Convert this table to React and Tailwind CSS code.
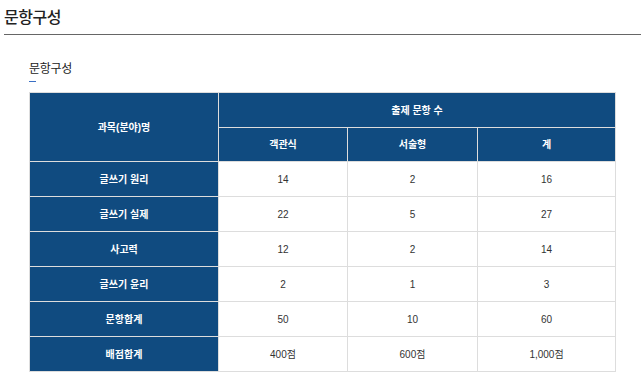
import React from 'react'

const rows = [
  ['글쓰기 원리', '14', '2', '16'],
  ['글쓰기 실제', '22', '5', '27'],
  ['사고력', '12', '2', '14'],
  ['글쓰기 윤리', '2', '1', '3'],
  ['문항합계', '50', '10', '60'],
  ['배점합계', '400점', '600점', '1,000점'],
]

const font = { fontFamily: '"Liberation Sans", "Noto Sans CJK KR", sans-serif' }

export default function App() {
  return (
    <div className="w-[641px] h-[387px] bg-white overflow-hidden text-[#222]" style={font}>
      <div className="ml-1">
        <h2 className="pt-[8px] pb-[6px] text-[16px] leading-[20px] font-medium tracking-[-0.5px] border-b border-[#666]">
          문항구성
        </h2>
        <div className="pl-[25px] pt-[26px]">
          <h3 className="text-[12px] leading-[16px] tracking-[-0.3px]">문항구성</h3>
          <div className="w-[7px] h-[1px] bg-[#3a6fc4] mt-[4px]"></div>

          <table className="mt-[10px] w-[587px] table-fixed border-collapse border border-[#dddddd] text-[10px]">
            <colgroup>
              <col className="w-[189px]" />
              <col className="w-[129px]" />
              <col className="w-[130px]" />
              <col />
            </colgroup>
            <thead>
              <tr className="h-[35px]">
                <th rowSpan={2} className="bg-[#104b80] text-white font-bold border border-[#dddddd]">과목(분야)명</th>
                <th colSpan={3} className="bg-[#104b80] text-white font-bold border border-[#dddddd]">출제 문항 수</th>
              </tr>
              <tr className="h-[34px]">
                <th className="bg-[#104b80] text-white font-bold border border-[#dddddd]">객관식</th>
                <th className="bg-[#104b80] text-white font-bold border border-[#dddddd]">서술형</th>
                <th className="bg-[#104b80] text-white font-bold border border-[#dddddd]">계</th>
              </tr>
            </thead>
            <tbody>
              {rows.map((r) => (
                <tr key={r[0]} className="h-[35px]">
                  <th className="bg-[#104b80] text-white font-bold border border-[#dddddd]">{r[0]}</th>
                  <td className="text-center text-[#333] border border-[#dddddd]">{r[1]}</td>
                  <td className="text-center text-[#333] border border-[#dddddd]">{r[2]}</td>
                  <td className="text-center text-[#333] border border-[#dddddd]">{r[3]}</td>
                </tr>
              ))}
            </tbody>
          </table>
        </div>
      </div>
    </div>
  )
}
